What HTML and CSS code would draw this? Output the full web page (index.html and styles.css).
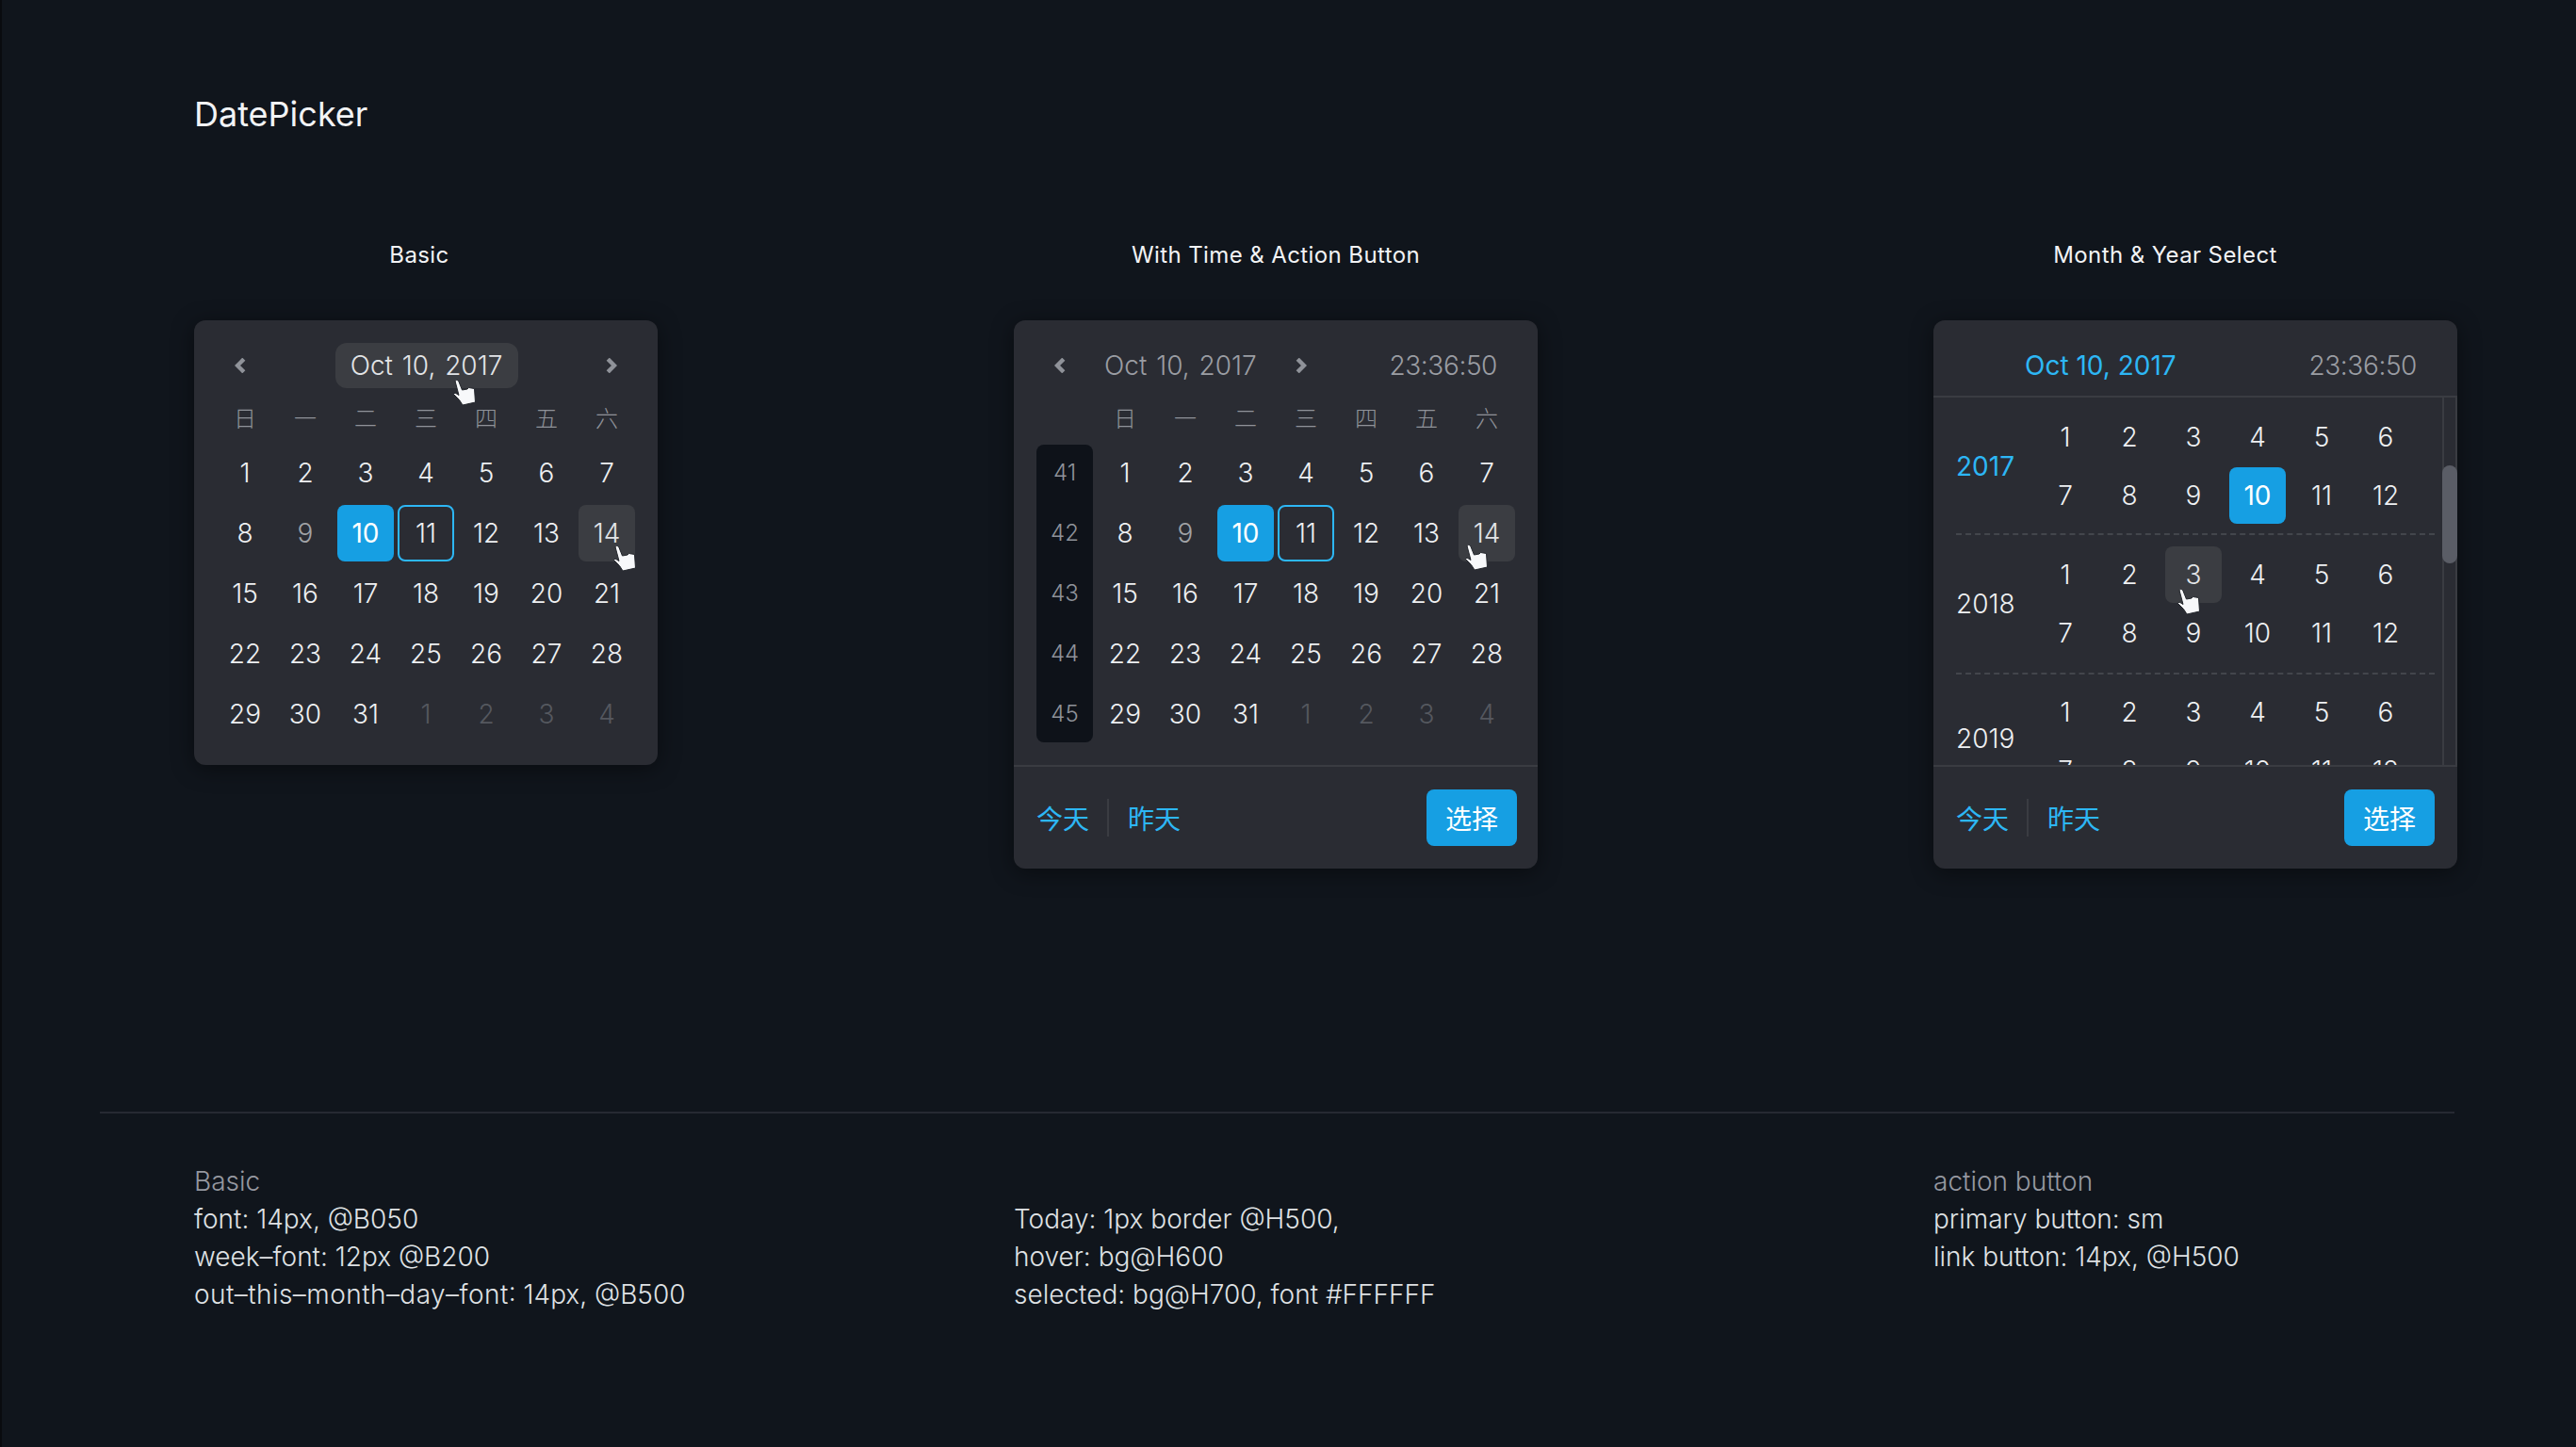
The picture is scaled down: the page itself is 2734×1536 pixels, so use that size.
FILE: index.html
```html
<!DOCTYPE html>
<html lang="en">
<head>
<meta charset="utf-8">
<title>DatePicker</title>
<link rel="stylesheet" href="styles.css">
</head>
<body>
<svg class="defs" width="0" height="0" aria-hidden="true">
  <symbol id="hand" viewBox="0 0 24 28">
    <path d="M2 1.5 Q3.5 -0.5 5.5 1 L9.5 11 L15 10 L16.5 8.5 L22.5 9.5 L23.5 24 L10 27 L6.5 21.5 L0.5 15.5 L2 14 L6 16.5 Z" fill="#f7f8fa" stroke="#23262c" stroke-width="1" stroke-linejoin="round"/>
  </symbol>
  <symbol id="chev-left" viewBox="0 0 12 16">
    <path d="M9.8 1.2 L3 8 L9.8 14.8" fill="none" stroke="#8f9299" stroke-width="4.4"/>
  </symbol>
  <symbol id="chev-right" viewBox="0 0 12 16">
    <path d="M2.2 1.2 L9 8 L2.2 14.8" fill="none" stroke="#8f9299" stroke-width="4.4"/>
  </symbol>
</svg>
<main class="page">
  <h1 class="title">DatePicker</h1>

  <section class="columns demos">
    <div class="demo">
      <h2 class="label label-basic">Basic</h2>
      <div class="picker">
        <div class="head head-basic">
          <svg class="chev"><use href="#chev-left"/></svg>
          <span class="head-date-hover">Oct 10, 2017<svg class="hand hand-head"><use href="#hand"/></svg></span>
          <svg class="chev"><use href="#chev-right"/></svg>
        </div>
        <div class="cal">
          <div class="days">
            <span class="wk">日</span><span class="wk">一</span><span class="wk">二</span><span class="wk">三</span><span class="wk">四</span><span class="wk">五</span><span class="wk">六</span>
            <span class="d">1</span><span class="d">2</span><span class="d">3</span><span class="d">4</span><span class="d">5</span><span class="d">6</span><span class="d">7</span>
            <span class="d">8</span><span class="d dim">9</span><span class="d sel">10</span><span class="d today">11</span><span class="d">12</span><span class="d">13</span><span class="d hov">14<svg class="hand hand-a"><use href="#hand"/></svg></span>
            <span class="d">15</span><span class="d">16</span><span class="d">17</span><span class="d">18</span><span class="d">19</span><span class="d">20</span><span class="d">21</span>
            <span class="d">22</span><span class="d">23</span><span class="d">24</span><span class="d">25</span><span class="d">26</span><span class="d">27</span><span class="d">28</span>
            <span class="d">29</span><span class="d">30</span><span class="d">31</span><span class="d out">1</span><span class="d out">2</span><span class="d out">3</span><span class="d out">4</span>
          </div>
        </div>
      </div>
    </div>

    <div class="demo">
      <h2 class="label label-time">With Time &amp; Action Button</h2>
      <div class="picker picker-wide">
        <div class="head head-time">
          <svg class="chev"><use href="#chev-left"/></svg>
          <span class="head-date">Oct 10, 2017</span>
          <svg class="chev"><use href="#chev-right"/></svg>
          <span class="head-clock">23:36:50</span>
        </div>
        <div class="cal cal-weeks">
          <div class="weeknums">
            <span>41</span><span>42</span><span>43</span><span>44</span><span>45</span>
          </div>
          <div class="days">
            <span class="wk">日</span><span class="wk">一</span><span class="wk">二</span><span class="wk">三</span><span class="wk">四</span><span class="wk">五</span><span class="wk">六</span>
            <span class="d">1</span><span class="d">2</span><span class="d">3</span><span class="d">4</span><span class="d">5</span><span class="d">6</span><span class="d">7</span>
            <span class="d">8</span><span class="d dim">9</span><span class="d sel">10</span><span class="d today">11</span><span class="d">12</span><span class="d">13</span><span class="d hov">14<svg class="hand hand-b"><use href="#hand"/></svg></span>
            <span class="d">15</span><span class="d">16</span><span class="d">17</span><span class="d">18</span><span class="d">19</span><span class="d">20</span><span class="d">21</span>
            <span class="d">22</span><span class="d">23</span><span class="d">24</span><span class="d">25</span><span class="d">26</span><span class="d">27</span><span class="d">28</span>
            <span class="d">29</span><span class="d">30</span><span class="d">31</span><span class="d out">1</span><span class="d out">2</span><span class="d out">3</span><span class="d out">4</span>
          </div>
        </div>
        <div class="foot">
          <a class="link">今天</a><i class="foot-sep"></i><a class="link">昨天</a>
          <button class="ok">选择</button>
        </div>
      </div>
    </div>

    <div class="demo">
      <h2 class="label label-month">Month &amp; Year Select</h2>
      <div class="picker picker-wide">
        <div class="head head-month">
          <span class="head-date active">Oct 10, 2017</span>
          <span class="head-clock">23:36:50</span>
        </div>
        <div class="years">
          <div class="year-list">
            <div class="year">
              <span class="year-name active">2017</span>
              <div class="months">
                <span class="m">1</span><span class="m">2</span><span class="m">3</span><span class="m">4</span><span class="m">5</span><span class="m">6</span>
                <span class="m">7</span><span class="m">8</span><span class="m">9</span><span class="m sel">10</span><span class="m">11</span><span class="m">12</span>
              </div>
            </div>
            <div class="year">
              <span class="year-name">2018</span>
              <div class="months">
                <span class="m">1</span><span class="m">2</span><span class="m hov">3<svg class="hand hand-c"><use href="#hand"/></svg></span><span class="m">4</span><span class="m">5</span><span class="m">6</span>
                <span class="m">7</span><span class="m">8</span><span class="m">9</span><span class="m">10</span><span class="m">11</span><span class="m">12</span>
              </div>
            </div>
            <div class="year">
              <span class="year-name">2019</span>
              <div class="months">
                <span class="m">1</span><span class="m">2</span><span class="m">3</span><span class="m">4</span><span class="m">5</span><span class="m">6</span>
                <span class="m">7</span><span class="m">8</span><span class="m">9</span><span class="m">10</span><span class="m">11</span><span class="m">12</span>
              </div>
            </div>
          </div>
          <div class="track"><div class="thumb"></div></div>
        </div>
        <div class="foot foot-month">
          <a class="link">今天</a><i class="foot-sep"></i><a class="link">昨天</a>
          <button class="ok">选择</button>
        </div>
      </div>
    </div>
  </section>

  <hr class="rule">

  <section class="columns notes">
    <div>
      <p class="note-head">Basic</p>
      <p>font: 14px, @B050</p>
      <p>week–font: 12px @B200</p>
      <p><span class="note-long">out–this–month–day–font</span>: 14px, @B500</p>
    </div>
    <div class="notes-mid">
      <p>Today: 1px border @H500,</p>
      <p>hover: bg@H600</p>
      <p>selected: bg@H700, font #FFFFFF</p>
    </div>
    <div>
      <p class="note-head">action button</p>
      <p>primary button: sm</p>
      <p>link button: 14px, @H500</p>
    </div>
  </section>
</main>
</body>
</html>
```
FILE: styles.css
```css
* { box-sizing: border-box; }
html, body { margin: 0; padding: 0; }
body {
  width: 2734px;
  height: 1536px;
  overflow: hidden;
  background: #10151c;
  border-left: 2px solid #090b0f;
  color: #eef0f2;
  font-family: Inter, "Noto Sans CJK SC", sans-serif;
  font-weight: 300;
  font-size: 28px;
}
.defs { position: absolute; }
.page { padding: 96px 0 0 204px; }
.title {
  margin: 0;
  height: 50px;
  line-height: 50px;
  font-size: 36px;
  font-weight: 400;
  color: #f2f3f5;
}
.columns {
  display: grid;
  grid-template-columns: 870px 976px 556px;
}
.demos { margin: 110px 0 258px; }
.rule {
  margin: 0 0 0 -100px;
  width: 2499px;
  height: 2px;
  border: 0;
  background: #262932;
}
.label {
  margin: 0 0 54px;
  height: 30px;
  line-height: 30px;
  font-size: 24px;
  font-weight: 400;
  letter-spacing: .4px;
  text-align: center;
  color: #f2f3f5;
  white-space: nowrap;
}
.label-basic { width: 478px; }
.label-time { width: 556px; }
.label-month { width: 492px; }

.picker {
  display: flow-root;
  width: 492px;
  height: 472px;
  background: #2a2c33;
  border-radius: 12px;
  box-shadow: 0 4px 24px rgba(0, 0, 0, .45);
}
.picker-wide { width: 556px; height: 582px; }

.head { display: flex; align-items: center; height: 48px; }
.head-basic { margin: 24px 24px 0; justify-content: space-between; padding: 0 19px 0 19px; }
.head-time { margin: 24px 24px 0; padding: 0 19px 0 19px; }
.head-month {
  height: 82px;
  padding: 24px 43px 8px 97px;
  border-bottom: 2px solid #3a3c42;
  justify-content: space-between;
}
.chev { width: 12px; height: 16px; flex: none; }
.head-date-hover {
  position: relative;
  width: 194px;
  height: 48px;
  line-height: 48px;
  text-align: center;
  margin-left: 1px;
  background: #3b3d42;
  border-radius: 12px;
  color: #e2e4e7;
  white-space: nowrap;
  word-spacing: 2px;
}
.head-date { color: #9a9da3; white-space: nowrap; word-spacing: 2px; }
.head-date.active { color: #2db7f5; font-weight: 400; word-spacing: 0; }
.year-name.active { color: #2db7f5; font-weight: 400; }
.head-clock { color: #9a9da3; white-space: nowrap; letter-spacing: -.4px; }
.head-time .head-date { margin: 0 41px 0 41px; }
.head-time .head-clock { margin-left: auto; }

.cal { padding: 16px 24px 24px; }
.cal-weeks { display: flex; gap: 4px; }
.weeknums {
  width: 60px;
  height: 316px;
  margin-top: 44px;
  display: grid;
  grid-auto-rows: 60px;
  row-gap: 4px;
  background: #0e1219;
  border-radius: 8px;
  font-size: 24px;
  color: #8f9299;
  text-align: center;
  line-height: 60px;
}
.days {
  display: grid;
  grid-template-columns: repeat(7, 60px);
  grid-template-rows: 40px repeat(5, 60px);
  gap: 4px;
}
.wk {
  text-align: center;
  line-height: 34px;
  font-size: 24px;
  color: #8f9299;
}
.d, .m {
  position: relative;
  text-align: center;
  height: 60px;
  line-height: 60px;
  border-radius: 8px;
}
.dim { color: #a0a2a6; }
.out { color: #55585f; }
.sel { background: #169fe3; color: #fff; font-weight: 400; }
.today { border: 2px solid #2db7f5; line-height: 56px; }
.hov { background: #3b3d42; color: #e2e4e7; }

.hand { position: absolute; width: 24px; height: 28px; z-index: 2; overflow: visible; }
.hand-head { left: 125px; top: 39px; }
.hand-a { left: 37px; top: 43px; }
.hand-b { left: 7px; top: 42px; }
.hand-c { left: 13px; top: 45px; }

.foot {
  display: flex;
  align-items: center;
  height: 110px;
  padding: 0 22px 0 24px;
  border-top: 2px solid #3a3c42;
}
.foot-month { padding-right: 24px; }
.link { color: #2db7f5; font-weight: 400; }
.foot-sep { width: 2px; height: 40px; margin: 0 20px 0 19px; background: #3a3c42; }
.ok {
  margin-left: auto;
  width: 96px;
  height: 60px;
  border: 0;
  border-radius: 8px;
  background: #169fe3;
  color: #fff;
  font: inherit;
  font-weight: 400;
}

.years { position: relative; display: flex; height: 390px; overflow: hidden; }
.year-list { flex: 1; padding: 0 8px 0 24px; }
.year {
  display: flex;
  align-items: center;
  padding: 12px 0 10px;
  border-bottom: 2px dashed #43464c;
}
.year + .year { padding: 12px 0; }
.year:last-child { border-bottom: 0; padding-top: 10px; }
.year:last-child .year-name { margin-bottom: 6px; }
.year-name { width: 86px; flex: none; white-space: nowrap; }
.months {
  display: grid;
  grid-template-columns: repeat(6, 60px);
  grid-auto-rows: 60px;
  gap: 2px 8px;
}
.track { width: 16px; flex: none; border-left: 2px solid #3a3c42; border-right: 2px solid #3a3c42; }
.thumb {
  position: absolute;
  right: 0;
  top: 72px;
  width: 16px;
  height: 104px;
  border-radius: 8px;
  background: #5a5d66;
}

.notes { margin-top: 52px; line-height: 40px; color: #dfe1e4; white-space: nowrap; }
.notes-mid { padding-top: 40px; }
.notes p { margin: 0; }
.notes .note-head { color: #9598a0; }
.note-long { letter-spacing: .45px; }
```
